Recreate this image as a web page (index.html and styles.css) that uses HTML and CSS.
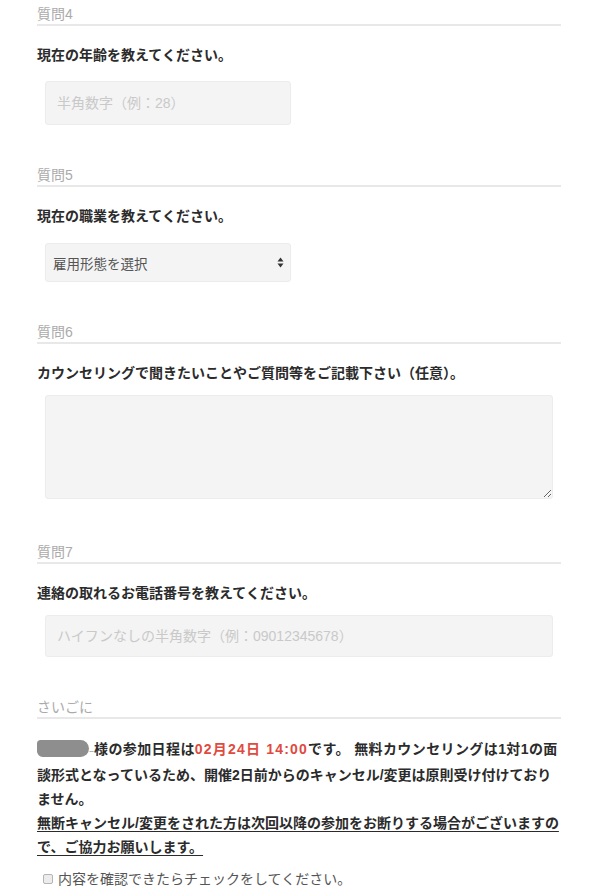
FILE: index.html
```html
<!DOCTYPE html>
<html lang="ja">
<head>
  <meta charset="UTF-8">
  <title>アンケート</title>
  <link rel="stylesheet" href="styles.css">
</head>
<body>
  <div class="form">
    <div class="section">
      <div class="q-label">質問4</div>
      <p class="q-text">現在の年齢を教えてください。</p>
      <input class="field short" type="text" placeholder="半角数字（例：28）">
    </div>

    <div class="section">
      <div class="q-label">質問5</div>
      <p class="q-text">現在の職業を教えてください。</p>
      <div class="field short select">
        <span>雇用形態を選択</span>
        <svg width="7" height="11" viewBox="0 0 7 11">
          <path d="M3.5 0.5 L6.5 4.5 L0.5 4.5 Z" fill="#333"/>
          <path d="M3.5 10.5 L6.5 6.5 L0.5 6.5 Z" fill="#333"/>
        </svg>
      </div>
    </div>

    <div class="section tall">
      <div class="q-label">質問6</div>
      <p class="q-text">カウンセリングで聞きたいことやご質問等をご記載下さい（任意）。</p>
      <textarea class="field wide area"></textarea>
    </div>

    <div class="section">
      <div class="q-label">質問7</div>
      <p class="q-text">連絡の取れるお電話番号を教えてください。</p>
      <input class="field wide phone" type="text" placeholder="ハイフンなしの半角数字（例：09012345678）">
    </div>

    <div class="section last">
      <div class="q-label">さいごに</div>
      <p class="notice"><span class="first"><span class="masked"></span><span class="dash">‐‐</span>様の参加日程は<span class="date">02月24日 14:00</span>です。 無料カウンセリングは1対1の面</span><br>談形式となっているため、開催2日前からのキャンセル/変更は原則受け付けており<br>ません。<br><u>無断キャンセル/変更をされた方は次回以降の参加をお断りする場合がございますの<br>で、ご協力お願いします。 </u></p>
      <label class="confirm"><span class="box"></span>内容を確認できたらチェックをしてください。</label>
    </div>
  </div>
</body>
</html>
```

FILE: styles.css
```css
body {
  margin: 0;
  background: #fff;
  font-family: "Liberation Sans", "Noto Sans CJK JP", sans-serif;
  color: #333;
}
.form { padding: 5px 39px 0 37px; }
.section { margin-bottom: 41px; }
.section.tall { margin-bottom: 44px; }
.section.last { margin-bottom: 0; }

.q-label {
  font-size: 14px;
  line-height: 18px;
  color: #aaa;
  padding-bottom: 1px;
  border-bottom: 2px solid #e8e8e8;
}
.q-text {
  margin: 19px 0 0;
  font-size: 14px;
  line-height: 20px;
  font-weight: bold;
  color: #2b2b2b;
}

.field {
  display: block;
  box-sizing: border-box;
  margin: 16px 8px 0;
  background: #f4f4f4;
  border: 1px solid #ececec;
  border-radius: 3px;
  font-family: inherit;
  font-size: 14px;
  color: #555;
  padding: 0 11px;
  outline: none;
}
.field::placeholder { color: #c9c9c9; }
.short { width: 246px; height: 44px; }
.wide { width: 508px; }

.select {
  height: 39px;
  margin-top: 17px;
  padding: 0 6px 0 7px;
  font-size: 13.5px;
  display: flex;
  align-items: center;
  justify-content: space-between;
}
.area { height: 104px; margin-top: 12px; resize: vertical; }
.phone { height: 42px; margin-top: 12px; }

.notice {
  margin: 18px 0 0;
  font-size: 14px;
  line-height: 24px;
  font-weight: bold;
  color: #2b2b2b;
  white-space: nowrap;
}
.first { letter-spacing: 0.4px; }
.masked {
  display: inline-block;
  width: 52px;
  height: 17px;
  vertical-align: -3px;
  background: #8e8e8e;
  border-radius: 4px 9px 9px 6px;
}
.dash {
  color: #9a9a9a;
  font-weight: normal;
  font-size: 9px;
  letter-spacing: -1px;
  margin-right: 1px;
}
.date { color: #e04a3f; letter-spacing: 1.2px; }
.notice u { text-underline-offset: 3px; }

.confirm {
  display: flex;
  align-items: center;
  gap: 5px;
  margin: 10px 0 0 6px;
  font-size: 14px;
  line-height: 20px;
  color: #555;
}
.box {
  width: 8px;
  height: 8px;
  border: 1px solid #b5b5b5;
  border-radius: 2px;
  background: #ececec;
}
```
